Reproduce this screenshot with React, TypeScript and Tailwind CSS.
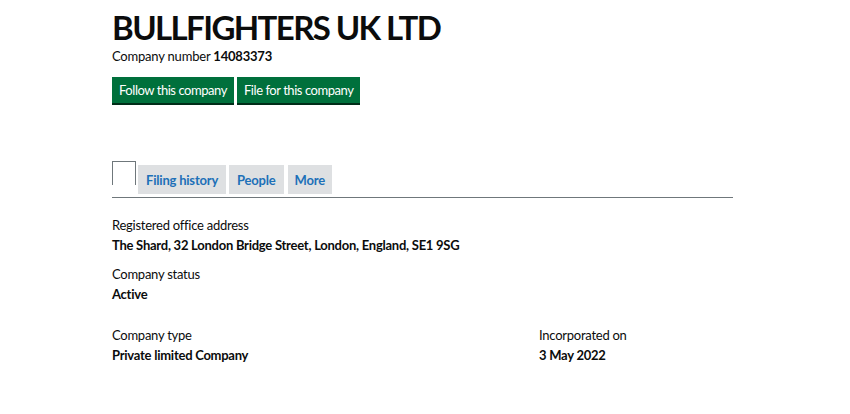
import React from "react";

export default function App() {
  return (
    <div className="min-h-[414px] bg-white text-[#0b0c0c]" style={{ fontFamily: 'Lato, "Liberation Sans", Arial, sans-serif' }}>
      <div className="ml-[112px] w-[621px] pt-[8px]">
        <h1 className="text-[33px] leading-[38px] font-bold tracking-[-1.6px]">BULLFIGHTERS UK LTD</h1>
        <p className="mt-[1px] text-[13px] leading-[18px] tracking-[-0.2px]">
          Company number <strong className="font-bold">14083373</strong>
        </p>
        <div className="mt-[12px] flex gap-[3px]">
          <button className="h-[26px] px-[7px] bg-[#00703c] text-white text-[13px] leading-[26px] tracking-[-0.45px] shadow-[0_2px_0_#002d18]">Follow this company</button>
          <button className="h-[26px] px-[7px] bg-[#00703c] text-white text-[13px] leading-[26px] tracking-[-0.45px] shadow-[0_2px_0_#002d18]">File for this company</button>
        </div>
        <div className="mt-[58px] flex items-end border-b border-[#6f777b] h-[37px]">
          <div className="w-[24px] h-[24px] mb-[12px] border border-b-0 border-[#6f777b] bg-white"></div>
          <div className="ml-[2px] mb-[3px] h-[29px] px-[8px] bg-[#dee0e2] text-[#1d70b8] font-bold text-[13px] leading-[31px] tracking-[-0.2px]">Filing history</div>
          <div className="ml-[3px] mb-[3px] h-[29px] px-[8px] bg-[#dee0e2] text-[#1d70b8] font-bold text-[13px] leading-[31px] tracking-[-0.2px]">People</div>
          <div className="ml-[4px] mb-[3px] h-[29px] px-[7px] bg-[#dee0e2] text-[#1d70b8] font-bold text-[13px] leading-[31px] tracking-[-0.2px]">More</div>
        </div>
        <dl className="mt-[18px] text-[13px] leading-[19px] tracking-[-0.25px]">
          <dt>Registered office address</dt>
          <dd className="font-bold mt-[1px]">The Shard, 32 London Bridge Street, London, England, SE1 9SG</dd>
          <dt className="mt-[10px]">Company status</dt>
          <dd className="font-bold mt-[1px]">Active</dd>
          <div className="mt-[22px] flex">
            <div className="w-[427px]">
              <dt>Company type</dt>
              <dd className="font-bold mt-[1px]">Private limited Company</dd>
            </div>
            <div>
              <dt>Incorporated on</dt>
              <dd className="font-bold mt-[1px]">3 May 2022</dd>
            </div>
          </div>
        </dl>
      </div>
    </div>
  );
}
